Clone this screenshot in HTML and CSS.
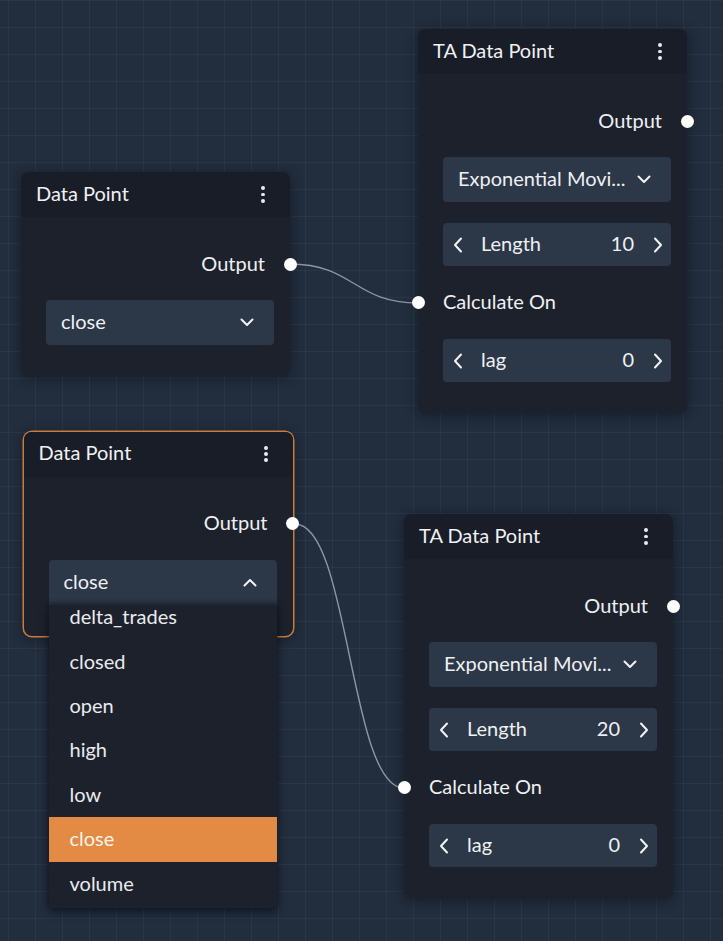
FILE: index.html
```html
<!DOCTYPE html>
<html lang="en">
<head>
<meta charset="utf-8">
<title>Flow Editor</title>
<link rel="stylesheet" href="styles.css">
</head>
<body>
<div class="canvas">
  <svg class="edges" width="723" height="941" viewBox="0 0 723 941">
    <path d="M290 264 C354 264 354 303 418 303" />
    <path d="M295 524 C349.5 524 349.5 788 404 788" />
  </svg>

  <div class="node" style="left:21px;top:172px;">
    <div class="node-header">
      <span class="node-title">Data Point</span>
      <span class="kebab"><i></i><i></i><i></i></span>
    </div>
    <div class="node-body">
      <div class="port-row port-out"><span>Output</span><span class="handle"></span></div>
      <div class="select">
        <span class="select-text">close</span>
        <svg class="chev" width="14" height="9" viewBox="0 0 14 9"><path d="M1.5 1.5 L7 7 L12.5 1.5"/></svg>
      </div>
    </div>
  </div>

  <div class="node node-selected" style="left:23.5px;top:431.5px;">
    <div class="node-header">
      <span class="node-title">Data Point</span>
      <span class="kebab"><i></i><i></i><i></i></span>
    </div>
    <div class="node-body">
      <div class="port-row port-out"><span>Output</span><span class="handle"></span></div>
      <div class="select select-open">
        <span class="select-text">close</span>
        <svg class="chev" width="14" height="9" viewBox="0 0 14 9"><path d="M1.5 7.5 L7 2 L12.5 7.5"/></svg>
        <div class="menu">
          <ul class="menu-list">
            <li>delta_trades</li>
            <li>closed</li>
            <li>open</li>
            <li>high</li>
            <li>low</li>
            <li class="active">close</li>
            <li>volume</li>
          </ul>
        </div>
      </div>
    </div>
  </div>

  <div class="node" style="left:418px;top:29px;">
    <div class="node-header">
      <span class="node-title">TA Data Point</span>
      <span class="kebab"><i></i><i></i><i></i></span>
    </div>
    <div class="node-body">
      <div class="port-row port-out"><span>Output</span><span class="handle"></span></div>
      <div class="select">
        <span class="select-text">Exponential Movi...</span>
        <svg class="chev" width="14" height="9" viewBox="0 0 14 9"><path d="M1.5 1.5 L7 7 L12.5 1.5"/></svg>
      </div>
      <div class="stepper">
        <svg class="arrow" width="10" height="16" viewBox="0 0 10 16"><path d="M8 1.5 L2 8 L8 14.5"/></svg>
        <span class="step-label">Length</span>
        <span class="step-value">10</span>
        <svg class="arrow" width="10" height="16" viewBox="0 0 10 16"><path d="M2 1.5 L8 8 L2 14.5"/></svg>
      </div>
      <div class="port-row port-in"><span class="handle"></span><span>Calculate On</span></div>
      <div class="stepper">
        <svg class="arrow" width="10" height="16" viewBox="0 0 10 16"><path d="M8 1.5 L2 8 L8 14.5"/></svg>
        <span class="step-label">lag</span>
        <span class="step-value">0</span>
        <svg class="arrow" width="10" height="16" viewBox="0 0 10 16"><path d="M2 1.5 L8 8 L2 14.5"/></svg>
      </div>
    </div>
  </div>

  <div class="node" style="left:404px;top:514px;">
    <div class="node-header">
      <span class="node-title">TA Data Point</span>
      <span class="kebab"><i></i><i></i><i></i></span>
    </div>
    <div class="node-body">
      <div class="port-row port-out"><span>Output</span><span class="handle"></span></div>
      <div class="select">
        <span class="select-text">Exponential Movi...</span>
        <svg class="chev" width="14" height="9" viewBox="0 0 14 9"><path d="M1.5 1.5 L7 7 L12.5 1.5"/></svg>
      </div>
      <div class="stepper">
        <svg class="arrow" width="10" height="16" viewBox="0 0 10 16"><path d="M8 1.5 L2 8 L8 14.5"/></svg>
        <span class="step-label">Length</span>
        <span class="step-value">20</span>
        <svg class="arrow" width="10" height="16" viewBox="0 0 10 16"><path d="M2 1.5 L8 8 L2 14.5"/></svg>
      </div>
      <div class="port-row port-in"><span class="handle"></span><span>Calculate On</span></div>
      <div class="stepper">
        <svg class="arrow" width="10" height="16" viewBox="0 0 10 16"><path d="M8 1.5 L2 8 L8 14.5"/></svg>
        <span class="step-label">lag</span>
        <span class="step-value">0</span>
        <svg class="arrow" width="10" height="16" viewBox="0 0 10 16"><path d="M2 1.5 L8 8 L2 14.5"/></svg>
      </div>
    </div>
  </div>
</div>
</body>
</html>
```

FILE: styles.css
```css
* { box-sizing: border-box; }
html, body {
  margin: 0;
  padding: 0;
  width: 723px;
  height: 941px;
  overflow: hidden;
}
body {
  font-family: Lato, "Open Sans", sans-serif;
  color: #eef0f3;
  background: #222d3d;
}
.canvas {
  position: relative;
  width: 723px;
  height: 941px;
  background-color: #222d3d;
  background-image:
    linear-gradient(to right, rgba(255,255,255,0.04) 1px, transparent 1px),
    linear-gradient(to bottom, rgba(255,255,255,0.04) 1px, transparent 1px);
  background-size: 27px 27px;
  background-position: 8px 0, 0 0;
}
.edges {
  position: absolute;
  left: 0;
  top: 0;
  z-index: 0;
}
.edges path {
  fill: none;
  stroke: #8c95a8;
  stroke-width: 1.4;
}
.node {
  position: absolute;
  z-index: 1;
  width: 269px;
  border-radius: 8px;
  background: #1d212c;
  box-shadow: 0 2px 12px rgba(10, 14, 22, 0.55);
}
.node-selected {
  box-shadow: 0 0 0 1.5px #c97b3c, 0 2px 12px rgba(10, 14, 22, 0.55);
  z-index: 3;
}
.node-header {
  height: 45px;
  display: flex;
  align-items: center;
  justify-content: space-between;
  padding: 0 25px 0 15px;
  background: #191d27;
  border-radius: 8px 8px 0 0;
}
.node-title {
  font-size: 20px;
  font-weight: 400;
  color: #f0f1f4;
  padding-bottom: 4px;
}
.kebab {
  display: flex;
  flex-direction: column;
  gap: 2.5px;
}
.kebab i {
  display: block;
  width: 3.8px;
  height: 3.8px;
  border-radius: 50%;
  background: #e8eaee;
}
.node-body {
  display: flex;
  flex-direction: column;
  gap: 21px;
  padding: 32px 16px 31px 25px;
}
.port-row {
  position: relative;
  height: 30px;
  display: flex;
  align-items: center;
  font-size: 20px;
}
.port-row > span:not(.handle) {
  padding-bottom: 3px;
}
.port-in {
  height: 31px;
}
.port-out {
  justify-content: flex-end;
  padding-right: 9px;
}
.handle {
  position: absolute;
  top: 50%;
  width: 13px;
  height: 13px;
  margin-top: -6.5px;
  border-radius: 50%;
  background: #ffffff;
}
.port-out .handle { right: -22.5px; }
.port-in .handle { left: -31.5px; }
.select {
  position: relative;
  height: 45px;
  display: flex;
  align-items: center;
  padding: 0 20px 0 15px;
  background: #2c3748;
  border-radius: 4px;
  font-size: 20px;
}
.select-open {
  border-radius: 4px 4px 0 0;
}
.select-text {
  flex: 1;
  min-width: 0;
  white-space: nowrap;
  padding-bottom: 3px;
}
.chev {
  flex: none;
}
.chev path, .arrow path {
  fill: none;
  stroke: #f2f3f5;
  stroke-width: 2;
  stroke-linecap: round;
  stroke-linejoin: round;
}
.stepper {
  height: 43px;
  display: flex;
  align-items: center;
  padding: 0 8px 0 10px;
  background: #2c3748;
  border-radius: 4px;
  font-size: 20px;
}
.stepper .arrow { flex: none; }
.step-label {
  flex: 1;
  margin-left: 18px;
  padding-bottom: 3px;
}
.step-value {
  margin-right: 19px;
  padding-bottom: 3px;
}
.menu {
  position: absolute;
  left: 0;
  right: 0;
  top: 100%;
  height: 303px;
  overflow: hidden;
  background: #1d212c;
  border-radius: 0 0 4px 4px;
  box-shadow: 0 -2px 4px rgba(8, 10, 16, 0.35), 0 4px 10px rgba(8, 10, 16, 0.6);
  z-index: 5;
}
.menu-list {
  list-style: none;
  margin: -9px 0 0 0;
  padding: 0;
}
.menu-list li {
  height: 44.4px;
  display: flex;
  align-items: center;
  padding: 0 0 3px 21px;
  font-size: 20px;
  color: #e9ebef;
}
.menu-list li.active {
  background: #e38a45;
  color: #fdf4ec;
}
```
